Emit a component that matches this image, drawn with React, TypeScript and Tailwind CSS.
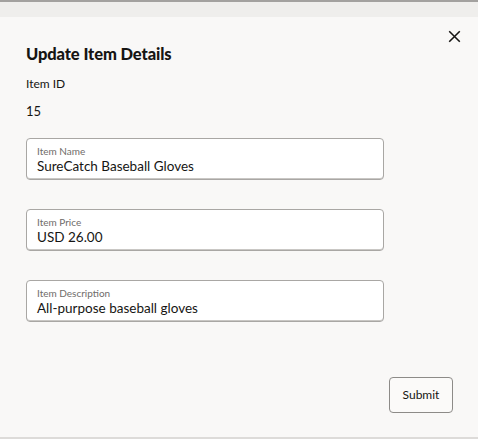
import React from "react";

type Field = {
  label: string;
  value: string;
};

const fields: Field[] = [
  { label: "Item Name", value: "SureCatch Baseball Gloves" },
  { label: "Item Price", value: "USD 26.00" },
  { label: "Item Description", value: "All-purpose baseball gloves" },
];

function FloatingField({ label, value }: Field) {
  return (
    <div className="flex h-[42px] w-[358px] flex-col justify-center rounded-[4px] border border-[#a9a7a4] bg-white px-[10px] pt-[1px] shadow-[inset_0_-1px_0_#c9c7c4]">
      <span className="text-[10px] leading-[12px] text-[#6f6c69]">{label}</span>
      <span className="mt-[1px] text-[13.5px] leading-[16px] text-[#161513]">{value}</span>
    </div>
  );
}

export default function App() {
  return (
    <div className="flex h-[439px] w-[478px] flex-col bg-[#f1f0ee] font-['Lato','Noto_Sans',sans-serif] text-[#161513]">
      <div className="h-[2px] bg-[#a3a19f]" />
      <div className="h-[15px] bg-[#efeeec]" />
      <div className="relative flex flex-1 flex-col bg-[#f9f8f7] px-[26px] pt-[26px]">
        <button
          type="button"
          aria-label="Close"
          className="absolute right-[12px] top-[7px] flex h-[24px] w-[24px] items-center justify-center text-[#161513]"
        >
          <svg viewBox="0 0 16 16" className="h-[13px] w-[13px]" fill="none" stroke="currentColor">
            <path d="M1.5 1.5l13 13M14.5 1.5l-13 13" strokeWidth="1.9" />
          </svg>
        </button>

        <h1 className="text-[16.5px] font-black leading-[22px] tracking-[-0.1px]">Update Item Details</h1>

        <div className="mt-[11px] text-[12px] leading-[16px]">Item ID</div>
        <div className="mt-[10px] text-[13px] leading-[18px]">15</div>

        <div className="mt-[18px] flex flex-col gap-[29px]">
          {fields.map((f) => (
            <FloatingField key={f.label} label={f.label} value={f.value} />
          ))}
        </div>

        <div className="-mr-px mt-[55px] flex justify-end">
          <button
            type="button"
            className="h-[36px] w-[64px] rounded-[4px] border border-[#8d8b88] bg-[#fbfaf9] text-[12px] text-[#161513]"
          >
            Submit
          </button>
        </div>
      </div>
      <div className="h-[2px] bg-[#dddbd9]" />
    </div>
  );
}
